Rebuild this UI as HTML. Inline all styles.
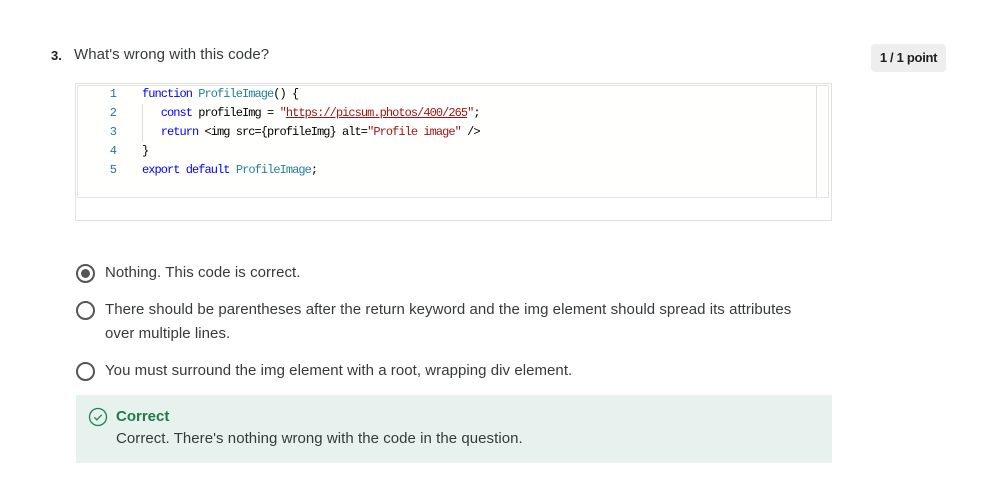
<!DOCTYPE html>
<html><head><style>
body{margin:0;width:990px;height:501px;background:#fff;font-family:"Liberation Sans",sans-serif;color:#333;position:relative;overflow:hidden}
.a{position:absolute;white-space:nowrap}
.t{font-size:15px;letter-spacing:0.05px;color:#373a3c}
.code{font-family:"Liberation Mono",monospace;font-size:12px;letter-spacing:-0.95px;line-height:19px}
.ln{color:#237893;width:20px;text-align:right}
.kw{color:#0000ff}.fn{color:#267f99}.st{color:#a31515}.pl{color:#000}
.radio{width:15px;height:15px;border:2px solid #555;border-radius:50%;box-sizing:content-box}
</style></head><body>
<div class="a" style="left:51px;top:48px;font-size:13px;font-weight:bold;color:#1f1f1f">3.</div>
<div class="a t" style="left:74px;top:46px">What's wrong with this code?</div>
<div class="a" style="left:871px;top:44px;width:75px;height:28px;background:#eeeeee;border-radius:4px;font-size:13px;font-weight:bold;color:#1f1f1f;text-align:center;line-height:28px;letter-spacing:-0.3px">1 / 1 point</div>

<div class="a" style="left:75px;top:83px;width:755px;height:136px;border:1px solid #e1e1e1;background:#fff"></div>
<div class="a" style="left:77px;top:85px;width:752px;height:113px;border:1px solid #e4e4e4;background:#fffffe;box-sizing:border-box"></div>
<div class="a" style="left:816px;top:86px;width:1px;height:112px;background:#e0e0e0"></div>
<div class="a" style="left:142px;top:104px;width:1px;height:38px;background:#ddd"></div>
<div class="a code" style="left:96px;top:85px">
<div class="ln">1</div><div class="ln">2</div><div class="ln">3</div><div class="ln">4</div><div class="ln">5</div></div>
<div class="a code" style="left:142px;top:85px">
<div><span class="kw">function</span> <span class="fn">ProfileImage</span><span class="pl">() {</span></div>
<div class="pl">&nbsp;&nbsp;&nbsp;<span class="kw">const</span> profileImg = <span class="st">"<span style="text-decoration:underline;text-decoration-color:#c00">https://picsum.photos/400/265</span>"</span>;</div>
<div class="pl">&nbsp;&nbsp;&nbsp;<span class="kw">return</span> &lt;img src={profileImg} alt=<span class="st">"Profile image"</span> /&gt;</div>
<div class="pl">}</div>
<div><span class="kw">export</span> <span class="kw">default</span> <span class="fn">ProfileImage</span><span class="pl">;</span></div>
</div>

<div class="a radio" style="left:76px;top:264px"></div>
<div class="a" style="left:81px;top:269px;width:9px;height:9px;border-radius:50%;background:#555"></div>
<div class="a t" style="left:105px;top:264px">Nothing. This code is correct.</div>
<div class="a radio" style="left:76px;top:301px"></div>
<div class="a t" style="left:105px;top:298px;line-height:24px;white-space:normal;width:720px">There should be parentheses after the return keyword and the img element should spread its attributes<br>over multiple lines.</div>
<div class="a radio" style="left:76px;top:362px"></div>
<div class="a t" style="left:105px;top:362px">You must surround the img element with a root, wrapping div element.</div>

<div class="a" style="left:76px;top:395px;width:756px;height:68px;background:#e7f1ed"></div>
<svg class="a" style="left:88px;top:407px" width="20" height="20" viewBox="0 0 20 20"><circle cx="10" cy="10" r="8.5" fill="none" stroke="#1f8354" stroke-width="1.3"/><path d="M6.3 10.3l2.5 2.5 4.9-5" fill="none" stroke="#1f8354" stroke-width="1.3"/></svg>
<div class="a" style="left:116px;top:408px;font-size:15px;font-weight:bold;color:#1f7a4c">Correct</div>
<div class="a t" style="left:116px;top:430px">Correct. There's nothing wrong with the code in the question.</div>
</body></html>
